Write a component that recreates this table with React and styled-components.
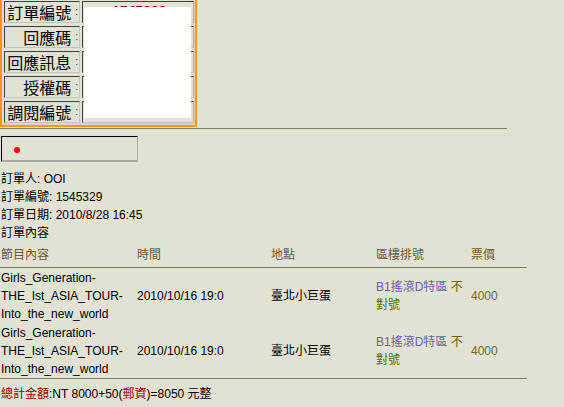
import React from "react";
import styled, { createGlobalStyle } from "styled-components";

const GlobalStyle = createGlobalStyle`
    html, body {
        margin: 0;
        padding: 0;
        background: #e1e1d4;
    }
    body {
        font-family: "Liberation Sans", Arial, "Noto Sans CJK TC", sans-serif;
        font-size: 12px;
        color: #000;
    }
`

const fields = ["訂單編號", "回應碼", "回應訊息", "授權碼", "調閱編號"];

const items = [
    {
        show: "Girls_Generation-THE_Ist_ASIA_TOUR-Into_the_new_world",
        time: "2010/10/16 19:0",
        place: "臺北小巨蛋",
        area: "B1搖滾D特區",
        seat: "不",
        seatRest: "對號",
        price: "4000",
    },
    {
        show: "Girls_Generation-THE_Ist_ASIA_TOUR-Into_the_new_world",
        time: "2010/10/16 19:0",
        place: "臺北小巨蛋",
        area: "B1搖滾D特區",
        seat: "不",
        seatRest: "對號",
        price: "4000",
    },
];

const App = () => {
    return (
        <Page>
            <GlobalStyle/>

            <FormBox>
                {fields.map((f, i) => (
                    <React.Fragment key={f}>
                        <LabelCell>
                            {f}<Colon>:</Colon>
                        </LabelCell>
                        <ValueCell>
                            {i === 0 && <OrderNo>1545329</OrderNo>}
                        </ValueCell>
                    </React.Fragment>
                ))}
                <Cover/>
            </FormBox>

            <Rule/>

            <StatusBox>
                <Dot/>
            </StatusBox>

            <Info>
                <div>訂單人: OOI</div>
                <div>訂單編號: 1545329</div>
                <div>訂單日期: 2010/8/28 16:45</div>
                <div>訂單內容</div>
            </Info>

            <OrderTable>
                <colgroup>
                    <col style={{width: 136}}/>
                    <col style={{width: 134}}/>
                    <col style={{width: 105}}/>
                    <col style={{width: 95}}/>
                    <col style={{width: 57}}/>
                </colgroup>
                <thead>
                    <tr>
                        <Th>節目內容</Th>
                        <Th>時間</Th>
                        <Th>地點</Th>
                        <Th>區樓排號</Th>
                        <Th>票價</Th>
                    </tr>
                </thead>
                <tbody>
                    {items.map((it, i) => (
                        <tr key={i}>
                            <Td>{it.show}</Td>
                            <Td>{it.time}</Td>
                            <Td>{it.place}</Td>
                            <Td>
                                <Area>{it.area}</Area> <Seat>{it.seat}<br/>{it.seatRest}</Seat>
                            </Td>
                            <Td><Price>{it.price}</Price></Td>
                        </tr>
                    ))}
                </tbody>
            </OrderTable>

            <Total>
                <Red>總計金額</Red>:NT 8000+50(<Red>郵資</Red>)=8050 元整
            </Total>
        </Page>
    )
}

export default App;

const Page = styled.div`
    width: 564px;
    height: 407px;
    overflow: hidden;
`

const FormBox = styled.div`
    position: relative;
    box-sizing: border-box;
    width: 197px;
    border: 2px solid #ff9900;
    border-top: none;
    padding: 1px 1px 2px 2px;
    display: grid;
    grid-template-columns: 76px 112px;
    grid-auto-rows: 22px;
    column-gap: 2px;
    row-gap: 3px;
    box-shadow: inset -2px -2px 0 #d6d6c8;
`

const LabelCell = styled.div`
    box-sizing: border-box;
    border-top: 1px solid #404040;
    border-left: 1px solid #404040;
    border-right: 1px solid #c4c4b8;
    border-bottom: 1px solid #c4c4b8;
    display: flex;
    align-items: center;
    justify-content: flex-end;
    padding-right: 1px;
    font-family: "Noto Sans CJK TC", sans-serif;
    font-size: 16px;
    line-height: 20px;
    white-space: nowrap;
    color: #000;
`

const Colon = styled.span`
    font-family: "Liberation Sans", sans-serif;
    font-size: 10px;
    color: #203a70;
    margin-left: 4px;
`

const ValueCell = styled.div`
    box-sizing: border-box;
    border-top: 1px solid #404040;
    border-left: 1px solid #404040;
    border-right: 1px solid #b0b0a4;
    border-bottom: 1px solid #c4c4b8;
    overflow: hidden;
`

const OrderNo = styled.span`
    display: block;
    padding: 1px 0 0 29px;
    font-size: 14px;
    line-height: 16px;
    font-weight: bold;
    color: #990000;
`

const Cover = styled.div`
    position: absolute;
    left: 82px;
    top: 7px;
    width: 107px;
    height: 111px;
    background: #fff;
`

const Rule = styled.div`
    width: 507px;
    height: 1px;
    margin-top: 1px;
    background: #7f7f62;
`

const StatusBox = styled.div`
    box-sizing: border-box;
    width: 137px;
    height: 26px;
    margin: 7px 0 0 1px;
    border-top: 1px solid #000;
    border-left: 1px solid #000;
    border-right: 1px solid #a8a8a8;
    border-bottom: 2px solid #a8a8a8;
    display: flex;
    align-items: center;
    padding: 3px 0 0 12px;
`

const Dot = styled.span`
    width: 6px;
    height: 6px;
    border-radius: 50%;
    background: #ff0000;
`

const Info = styled.div`
    margin-top: 8px;
    padding-left: 1px;
    line-height: 18px;
`

const OrderTable = styled.table`
    width: 527px;
    table-layout: fixed;
    border-collapse: collapse;
    border-spacing: 0;
    margin-top: 4px;
    line-height: 18px;
    font-size: 12px;
`

const Th = styled.th`
    text-align: left;
    font-weight: normal;
    color: #6b5a35;
    padding: 0 0 3px 1px;
    border-bottom: 1px solid #7f7f62;
`

const Td = styled.td`
    padding: 1px 0 0 1px;
    vertical-align: middle;
    color: #000;
    tr:last-child & {
        border-bottom: 1px solid #7f7f62;
    }
`

const Area = styled.span`
    color: #6666a6;
`

const Seat = styled.span`
    color: #666600;
`

const Price = styled.span`
    color: #6b6b2e;
`

const Total = styled.div`
    margin-top: 6px;
    padding-left: 1px;
    line-height: 18px;
`

const Red = styled.span`
    color: #990000;
`
